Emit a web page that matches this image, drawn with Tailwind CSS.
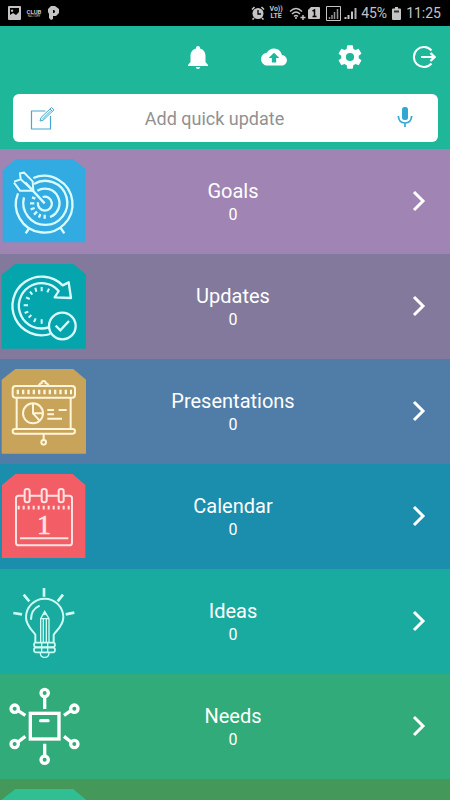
<!DOCTYPE html>
<html lang="en">
<head>
  <meta charset="UTF-8" />
  <meta name="viewport" content="width=device-width, initial-scale=1.0"/>
  <title>Club Factory - Home</title>
  <script src="https://cdn.jsdelivr.net/npm/@tailwindcss/browser@4"></script>
</head>
<body class="h-screen flex flex-col overflow-hidden bg-[#1fb799] font-[Roboto,sans-serif]">

  <!-- Status bar -->
  <div class="h-[26px] shrink-0 bg-black text-[#c4c4c4] flex items-center justify-between pl-2 pr-[9px]">
    <div class="flex items-center gap-[5px]">
      <svg class="w-[13px] h-[14px]" viewBox="0 0 13 14" fill="currentColor"><path fill-rule="evenodd" d="M1 0h11a1 1 0 0 1 1 1v12a1 1 0 0 1-1 1H1a1 1 0 0 1-1-1V1a1 1 0 0 1 1-1zM2 2v7l3-2 3 2 3-3V2zM4 3.500a1.200 1.200 0 1 0 .1 0z"/></svg>
      <div class="w-4 flex flex-col items-center">
        <span class="text-[6px] leading-[6px] font-bold">CLUB</span>
        <span class="text-[3px] leading-[3px]">FACTORY</span>
      </div>
      <svg class="ml-px w-[11px] h-[14px]" viewBox="0 0 11 14" fill="currentColor"><path fill-rule="evenodd" d="M3 0h4l4 3v4l-3 3H5v3l-2 1-2-2V8L0 6V3zM5 4v3h1l1-1V5L6 4z"/></svg>
    </div>
    <div class="flex items-center text-sm leading-[14px]">
      <svg class="w-[14px] h-[14px]" viewBox="0 0 14 14"><circle cx="7" cy="7.500" r="5.500" fill="currentColor"/><path d="M1 3.500 3.500 1M10.500 1 13 3.500M3 12l-1.500 1.500M11 12l1.500 1.500" stroke="currentColor" stroke-width="1.600"/><path d="M7 4v4h3" stroke="#000" stroke-width="1.300" fill="none"/></svg>
      <div class="ml-1 w-[14px] flex flex-col items-center text-[7px] leading-[7px] font-bold"><span>Vo))</span><span>LTE</span></div>
      <svg class="ml-[6px] w-[17px] h-[13px]" viewBox="0 0 17 13" fill="none" stroke="currentColor" stroke-width="1.400"><path d="M1 4.500q6-6 12 0M3 7q4-4 8 0M5 9.500q2-2 4 0"/><circle cx="7" cy="11" r="1" fill="currentColor" stroke="none"/><path d="M11.500 10.500h5M14 8v5"/></svg>
      <svg class="ml-[2px] w-[12px] h-[12px]" viewBox="0 0 12 12"><path d="M3 0h8a1 1 0 0 1 1 1v10a1 1 0 0 1-1 1H1a1 1 0 0 1-1-1V3z" fill="currentColor"/><path d="M4.500 4 6.500 3v7M4.500 9.500h4" stroke="#000" stroke-width="1.500" fill="none"/></svg>
      <svg class="ml-[6px] w-[15px] h-[15px]" viewBox="0 0 15 15" stroke="currentColor" fill="none"><path d="M.5.5h14v14H.5z"/><path d="M3.500 13v-2M6 13V9M8.500 13V6M11.500 13V3" stroke-width="1.500" opacity=".75"/></svg>
      <svg class="ml-[3px] w-[13px] h-[13px]" viewBox="0 0 13 13" stroke="currentColor" stroke-width="2"><path d="M1.500 12v-2M4.500 12V8M8 12V4.500"/><path d="M11.500 12V1" opacity=".9"/></svg>
      <span class="ml-1 mr-[5px]">45%</span>
      <svg class="w-[9px] h-[13px] mr-[5px]" viewBox="0 0 9 13"><path d="M3 0h3v1.500h2a1 1 0 0 1 1 1V12a1 1 0 0 1-1 1H1a1 1 0 0 1-1-1V2.500a1 1 0 0 1 1-1h2z" fill="currentColor"/><path d="M2 4.500h5" stroke="#333" stroke-width="2"/></svg>
      <span>11:25</span>
    </div>
  </div>

  <!-- Header -->
  <header class="shrink-0 text-white">
    <div class="h-[68px] flex items-center justify-end gap-12 pr-[14px] pb-1.5">
      <button type="button" aria-label="Notifications" class="w-7 h-7">
        <svg class="w-7 h-7" viewBox="0 0 28 28" fill="currentColor"><path d="M14 3c-1.200 0-2 .8-2 2v.6C8.500 6.500 6.500 9.300 6.500 13v6L4 22v1h20v-1l-2.500-3v-6c0-3.700-2-6.500-5.500-7.400V5c0-1.200-.8-2-2-2zM11.800 24h4.400c0 1.300-1 2-2.200 2s-2.200-.7-2.200-2z"/></svg>
      </button>
      <button type="button" aria-label="Upload" class="w-7 h-7">
        <svg class="w-7 h-7" viewBox="-1 -1 26 26" fill="currentColor"><path d="M19.350 10.040C18.670 6.590 15.640 4 12 4 9.110 4 6.600 5.640 5.350 8.040 2.340 8.360 0 10.910 0 14c0 3.310 2.690 6 6 6h13c2.760 0 5-2.240 5-5 0-2.640-2.050-4.780-4.650-4.960zM14 13v4h-4v-4H7l5-5 5 5h-3z"/></svg>
      </button>
      <button type="button" aria-label="Settings" class="w-7 h-7">
        <svg class="w-7 h-7" viewBox="0 0 24 24" fill="currentColor"><path d="M19.430 12.980c.04-.32.07-.64.07-.98s-.03-.66-.07-.98l2.110-1.650c.19-.15.24-.42.12-.64l-2-3.460c-.12-.22-.39-.3-.61-.22l-2.490 1c-.52-.4-1.080-.73-1.690-.98l-.38-2.650C14.460 2.180 14.250 2 14 2h-4c-.25 0-.46.18-.49.42l-.38 2.650c-.61.25-1.170.59-1.690.98l-2.490-1c-.23-.09-.49 0-.61.22l-2 3.460c-.13.22-.07.49.12.64l2.110 1.650c-.04.32-.07.65-.07.98s.03.66.07.98l-2.110 1.650c-.19.15-.24.42-.12.64l2 3.460c.12.22.39.3.61.22l2.490-1c.52.4 1.080.73 1.690.98l.38 2.650c.03.24.24.42.49.42h4c.25 0 .46-.18.49-.42l.38-2.650c.61-.25 1.170-.59 1.690-.98l2.490 1c.23.09.49 0 .61-.22l2-3.460c.12-.22.07-.49-.12-.64zM12 15.500a3.500 3.500 0 1 1 0-7 3.500 3.500 0 0 1 0 7z"/></svg>
      </button>
      <button type="button" aria-label="Log out" class="w-6 h-7">
        <svg class="w-6 h-7" viewBox="0 0 24 28" fill="none" stroke="currentColor" stroke-width="2"><path d="M19.500 7.500a10 10 0 1 0 0 13M9 14h12"/><path d="M18.500 10 22.500 14l-4 4" stroke-width="2.400"/></svg>
      </button>
    </div>

    <form class="mx-3 ml-[13px] mb-[7px] h-12 bg-white rounded-md flex items-center">
      <label for="update" class="w-11 pl-[17px]" aria-label="Quick update">
        <svg class="w-[26px] h-[26px]" viewBox="0 0 26 26" fill="none" stroke="#45a9cf"><path d="M15.500 6H1.500v18h19V11" stroke-width="1.200"/><path d="m10 16 1-3.500L21.500 2.500 24 4.800 13 15.300zM20 4l2.500 2.500M12 14.500l9-9"/></svg>
      </label>
      <input type="text" id="update" name="update" placeholder="Add quick update"
             class="flex-1 min-w-0 h-full text-lg text-center text-gray-700 placeholder:text-[#919191] focus:outline-none"/>
      <button type="button" aria-label="Dictate" class="w-[66px] h-full pb-0.5 flex items-center justify-center text-[#32a7d6]">
        <svg class="w-4 h-6" viewBox="0 0 16 24" fill="none" stroke="currentColor"><rect x="5" y="2" width="6" height="13" rx="2.500" fill="currentColor" stroke="none"/><path d="M1.300 11q.5 7 6.700 7t6.700-7M8 18v4" stroke-width="1.700"/></svg>
      </button>
    </form>
  </header>

  <!-- Menu -->
  <nav class="flex-1 min-h-0 overflow-hidden text-white">
    <a href="#goals" class="h-[105px] bg-[#a084b4] flex items-center">
      <svg class="w-[100px] h-[105px]" viewBox="0 -3 300 315" fill="none" stroke="#d9fbff" stroke-width="7">
        <path d="M8 277V60L48 27H218L256 56V277z" fill="#31abe1" stroke="none"/>
        <path d="M100 84A85 85 0 1 1 54 130"/>
        <path d="M102 102A66 66 0 1 1 72 142"/>
        <path d="M112 122A44 44 0 1 1 150 201"/>
        <path d="M128 141A21 21 0 1 1 114 157M76 98 134 160"/>
        <path d="M42 95 62 88 60 70 72 68 98 94 100 122 60 122 42 98M62 88 98 120" stroke-width="6"/>
        <path d="M90 160h13M92 178l12-4M102 194l9-9M117 203l4-11M134 206v-12M96 142l10 4M88 234l-11 16M182 234l11 16"/>
      </svg>
      <span class="flex-1 text-center pt-0.5">
        <span class="block text-xl leading-6">Goals</span>
        <span class="block text-base leading-6">0</span>
      </span>
      <svg class="mb-0.5 w-[84px] h-6" viewBox="0 0 84 24" fill="none" stroke="currentColor" stroke-width="3"><path d="m48 3 9 9-9 9"/></svg>
    </a>

    <a href="#updates" class="h-[105px] bg-[#82799d] flex items-center">
      <svg class="w-[100px] h-[105px]" viewBox="0 -3 300 315" fill="none" stroke="#d9fbff" stroke-width="7">
        <path d="M5 281V59L46 27H220L258 59V281z" fill="#04a5ad" stroke="none"/>
        <path d="M151 237A88 88 0 1 1 188 91L206 82 213 129 164 127 176 108A68 68 0 1 0 146 217" stroke-linejoin="round"/>
        <circle cx="187" cy="213" r="40"/>
        <path d="m167 212 14 14 26-28"/>
        <path d="M125 96v13M106 98l3 12M147 101l-5 11M90 110l7 9M78 127l11 5M71 151h13M74 174l11-4M86 188l8-8M102 201l5-11M125 206v-13" stroke-width="6"/>
      </svg>
      <span class="flex-1 text-center pt-0.5">
        <span class="block text-xl leading-6">Updates</span>
        <span class="block text-base leading-6">0</span>
      </span>
      <svg class="mb-0.5 w-[84px] h-6" viewBox="0 0 84 24" fill="none" stroke="currentColor" stroke-width="3"><path d="m48 3 9 9-9 9"/></svg>
    </a>

    <a href="#presentations" class="h-[105px] bg-[#507da8] flex items-center">
      <svg class="w-[100px] h-[105px]" viewBox="0 -3 300 315" fill="none" stroke="#fff5d9" stroke-width="6">
        <path d="M5 281V59L46 27H220L258 59V281z" fill="#c8a45a" stroke="none"/>
        <rect x="38" y="78" width="187" height="35" rx="9"/>
        <path d="M116 77q3-7 9-8a6 6 0 0 1 12 0q7 2 9 8M50 114v92M212 114v92M131 222v17"/>
        <path d="M50 96H216" stroke-width="13" stroke-dasharray="7 9"/>
        <rect x="38" y="207" width="187" height="14" rx="7"/>
        <circle cx="131" cy="247" r="7"/>
        <circle cx="99" cy="160" r="30"/>
        <path d="M99 130v30h30M99 160l20 22M142 150h20M176 150h24M142 163h20M142 176h44"/>
      </svg>
      <span class="flex-1 text-center pt-0.5">
        <span class="block text-xl leading-6">Presentations</span>
        <span class="block text-base leading-6">0</span>
      </span>
      <svg class="mb-0.5 w-[84px] h-6" viewBox="0 0 84 24" fill="none" stroke="currentColor" stroke-width="3"><path d="m48 3 9 9-9 9"/></svg>
    </a>

    <a href="#calendar" class="h-[105px] bg-[#1b8dad] flex items-center">
      <svg class="w-[100px] h-[105px]" viewBox="0 -3 300 315" fill="none" stroke="#ffe3e3" stroke-width="6">
        <path d="M6 279V60L46 27H218L256 60V279z" fill="#f35d66" stroke="none"/>
        <rect x="48" y="92" width="168" height="149" rx="8"/>
        <path d="M53 128H212" stroke-width="11" stroke-dasharray="6 9"/>
        <g fill="#f35d66"><rect x="74" y="72" width="15" height="40" rx="7"/><rect x="125" y="72" width="15" height="40" rx="7"/><rect x="176" y="72" width="15" height="40" rx="7"/></g>
        <path d="M60 220H205"/>
        <text x="132" y="206" text-anchor="middle" font-family="Liberation Serif, serif" font-size="84" fill="#ffe3e3" stroke-width="2">1</text>
      </svg>
      <span class="flex-1 text-center pt-0.5">
        <span class="block text-xl leading-6">Calendar</span>
        <span class="block text-base leading-6">0</span>
      </span>
      <svg class="mb-0.5 w-[84px] h-6" viewBox="0 0 84 24" fill="none" stroke="currentColor" stroke-width="3"><path d="m48 3 9 9-9 9"/></svg>
    </a>

    <a href="#ideas" class="h-[105px] bg-[#19ab9f] flex items-center">
      <svg class="w-[100px] h-[105px]" viewBox="0 -3 300 315" fill="none" stroke="#cdfcf3" stroke-width="6">
        <path d="M106 217V194C97 180 78 168 78 142a56 56 0 0 1 112 0c0 26-20 38-29 52v23"/>
        <path d="M93 149c0-22 10-35 26-42"/>
        <path d="M122 216V146l12-22 13 22v70M122 146h25M130 148v68M139 148v68" stroke-width="4"/>
        <path d="m129 134 5-9 5 9z" fill="#cdfcf3" stroke-width="2"/>
        <rect x="102" y="218" width="63" height="13" rx="6" stroke-width="5"/>
        <rect x="102" y="233" width="63" height="14" rx="6" stroke-width="5"/>
        <path d="M121 249q0 13 13 13t13-13M125 218v28M143 218v28" stroke-width="4"/>
        <path d="M132 54v26M71 74l17 20M189 74l-16 20M40 129l26 4M223 128l-26 5" stroke-width="8"/>
      </svg>
      <span class="flex-1 text-center pt-0.5">
        <span class="block text-xl leading-6">Ideas</span>
        <span class="block text-base leading-6">0</span>
      </span>
      <svg class="mb-0.5 w-[84px] h-6" viewBox="0 0 84 24" fill="none" stroke="currentColor" stroke-width="3"><path d="m48 3 9 9-9 9"/></svg>
    </a>

    <a href="#needs" class="h-[105px] bg-[#31ab79] flex items-center">
      <svg class="w-[100px] h-[105px]" viewBox="0 -3 300 315" fill="none" stroke="#fff" stroke-width="10">
        <rect x="91" y="115" width="86" height="77"/>
        <path d="M122 137h22" stroke-linecap="round"/>
        <g><circle cx="134" cy="54" r="11"/><circle cx="134" cy="254" r="11"/><circle cx="44" cy="101" r="11"/><circle cx="223" cy="101" r="11"/><circle cx="44" cy="207" r="11"/><circle cx="223" cy="207" r="11"/></g>
        <path d="M134 64v38M134 206v38M54 107l22 14M213 107l-21 14M54 201l22-17M213 201l-21-17"/>
      </svg>
      <span class="flex-1 text-center pt-0.5">
        <span class="block text-xl leading-6">Needs</span>
        <span class="block text-base leading-6">0</span>
      </span>
      <svg class="mb-0.5 w-[84px] h-6" viewBox="0 0 84 24" fill="none" stroke="currentColor" stroke-width="3"><path d="m48 3 9 9-9 9"/></svg>
    </a>

    <a href="#more" aria-label="More" class="h-[105px] bg-[#43985a] flex items-center">
      <svg class="w-[100px] h-[105px]" viewBox="0 -3 300 315"><path d="M5 281V59L46 27H220L258 59V281z" fill="#2fbf92"/></svg>
    </a>
  </nav>
</body>
</html>
